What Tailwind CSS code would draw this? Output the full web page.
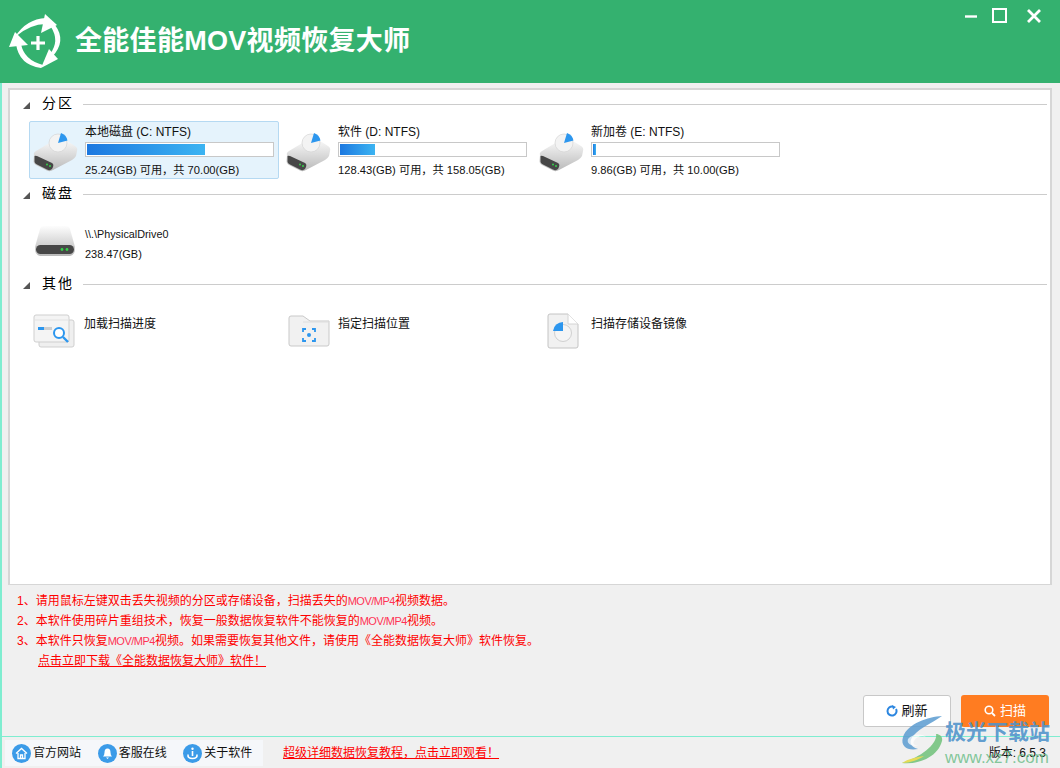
<!DOCTYPE html>
<html lang="zh-CN">
  <head>
    <meta charset="UTF-8" />
    <title>全能佳能MOV视频恢复大师</title>
    <script src="https://cdn.jsdelivr.net/npm/@tailwindcss/browser@4"></script>
  </head>
  <body class="bg-[#f0f0f0] overflow-hidden font-['Liberation_Sans','Noto_Sans_CJK_SC',sans-serif] text-black">
    <svg width="0" height="0" class="absolute">
      <defs>
        <linearGradient id="bodyGrad" x1="0" y1="0" x2="0" y2="1">
          <stop offset="0" stop-color="#fdfdfd" />
          <stop offset="1" stop-color="#b9b9b9" />
        </linearGradient>
        <symbol id="volume" viewBox="0 0 48 44">
          <path d="M2 26 Q1 24 4 22 L24 10 Q28 8 32 10 L43 17 Q46 19 45 22 L44 27 Q43 29 40 31 L21 41 Q18 43 15 41.5 L4 36 Q1 34 1.5 31 Z" fill="url(#bodyGrad)" />
          <path d="M2.5 28 Q2 26 5 27 L20 34 Q22 35 21 38 L20 40 Q18 42 15 40.5 L5 35.5 Q2 34 2.5 31 Z" fill="#474747" />
          <circle cx="15" cy="35.5" r="1" fill="#35d04a" />
          <circle cx="18" cy="37" r="1" fill="#35d04a" />
          <circle cx="26" cy="14" r="9" fill="#f3f3f3" stroke="#d4d4d4" stroke-width="0.7" />
          <path d="M26 14 L29 4 A10 10 0 0 1 35.5 11.5 Z" fill="#2c96ee" />
        </symbol>
      </defs>
    </svg>

    <div class="relative w-[1060px] h-[768px] flex flex-col">
      <!-- title bar -->
      <header class="h-[83px] shrink-0 bg-[#34b16f] flex items-center relative">
        <svg class="mt-[12px] w-[75px] h-[75px] shrink-0" viewBox="0 0 75 75" fill="none">
          <path d="M15 27 Q26 9 46 8 L46 14 Q30 14 15 27 Z" fill="#fff" />
          <path d="M45 4 L57 15 L41 23 Z" fill="#fff" />
          <path d="M55 15 Q67 31 52 47 L50 44 Q60 31 51 17 Z" fill="#fff" />
          <path d="M49 39 L58 49 L41 58 Z" fill="#fff" />
          <path d="M16 34 L21 34 Q24 50 43 55 L41 58 Q19 55 16 34 Z" fill="#fff" />
          <path d="M15 22 L9 37 L28 35 Z" fill="#fff" />
          <path d="M38 26 V40 M31 33 H45" stroke="#fff" stroke-width="3.2" />
        </svg>
        <h1 class="mt-[-1px] text-[27px] leading-none font-bold tracking-[0.3px] text-white whitespace-nowrap">全能佳能MOV视频恢复大师</h1>
        <div class="absolute left-[965px] top-[8px] flex items-center">
          <svg class="w-[12px] h-[14px]" viewBox="0 0 12 14"><path d="M0 7.5 H12" stroke="#fff" stroke-width="2.4" /></svg>
          <svg class="w-[15px] h-[15px] ml-[15px]" viewBox="0 0 15 15" fill="none"><rect x="1" y="1" width="13" height="13" stroke="#fff" stroke-width="2" /></svg>
          <svg class="w-[14px] h-[14px] ml-[20px]" viewBox="0 0 14 14"><path d="M1 1 L13 13 M13 1 L1 13" stroke="#fff" stroke-width="2.8" /></svg>
        </div>
      </header>

      <div class="flex-1 flex flex-col border-l-2 border-[#7fedd0] min-h-0">
        <!-- device list -->
        <main class="mt-[5px] ml-[6px] mr-[8px] h-[497px] shrink-0 bg-white border-2 border-[#d6d6d6] border-b-[1.5px] pl-[13px] pr-[3px] pt-[4px]">
          <section class="h-[90px]">
            <div class="flex items-center h-[20px]">
              <span class="w-0 h-0 border-l-[7px] border-l-transparent border-b-[7px] border-b-[#555] mr-[12px] mt-[3px]"></span>
              <span class="text-[14px] tracking-[2px] w-[41px] shrink-0 mt-[-2px]">分区</span>
              <span class="flex-1 h-px bg-[#cccccc]"></span>
            </div>
            <div class="flex gap-[3px] mt-[7px] ml-[6px]">
              <div class="w-[250px] h-[58px] flex bg-[#e5f3fc] border border-[#b5d9f2] rounded-[2px]">
                <svg class="w-[48px] h-[44px] mt-[7px] ml-[2px] shrink-0"><use href="#volume" /></svg>
                <div class="ml-[5px] w-[190px] text-[12px] leading-none">
                  <div class="mt-[3px] h-[15px] leading-[15px] text-[#111] whitespace-nowrap">本地磁盘 (C: NTFS)</div>
                  <div class="mt-[2px] w-[189px] h-[15px] border border-[#c8c8c8] bg-white p-[1px]"><div class="h-full bg-[linear-gradient(90deg,#1c78e0,#3cb4f2)]" style="width: 64%"></div></div>
                  <div class="mt-[6px] text-[11.2px] leading-[14px] whitespace-nowrap text-[#111]">25.24(GB) 可用，共 70.00(GB)</div>
                </div>
              </div>
              <div class="w-[250px] h-[58px] flex border border-transparent">
                <svg class="w-[48px] h-[44px] mt-[7px] ml-[2px] shrink-0"><use href="#volume" /></svg>
                <div class="ml-[5px] w-[190px] text-[12px] leading-none">
                  <div class="mt-[3px] h-[15px] leading-[15px] text-[#111] whitespace-nowrap">软件 (D: NTFS)</div>
                  <div class="mt-[2px] w-[189px] h-[15px] border border-[#c8c8c8] bg-white p-[1px]"><div class="h-full bg-[linear-gradient(90deg,#1c78e0,#3cb4f2)]" style="width: 19%"></div></div>
                  <div class="mt-[6px] text-[11.2px] leading-[14px] whitespace-nowrap text-[#111]">128.43(GB) 可用，共 158.05(GB)</div>
                </div>
              </div>
              <div class="w-[250px] h-[58px] flex border border-transparent">
                <svg class="w-[48px] h-[44px] mt-[7px] ml-[2px] shrink-0"><use href="#volume" /></svg>
                <div class="ml-[5px] w-[190px] text-[12px] leading-none">
                  <div class="mt-[3px] h-[15px] leading-[15px] text-[#111] whitespace-nowrap">新加卷 (E: NTFS)</div>
                  <div class="mt-[2px] w-[189px] h-[15px] border border-[#c8c8c8] bg-white p-[1px]"><div class="h-full bg-[linear-gradient(90deg,#1c78e0,#3cb4f2)]" style="width: 1.5%"></div></div>
                  <div class="mt-[6px] text-[11.2px] leading-[14px] whitespace-nowrap text-[#111]">9.86(GB) 可用，共 10.00(GB)</div>
                </div>
              </div>
            </div>
          </section>

          <section class="h-[90px]">
            <div class="flex items-center h-[20px]">
              <span class="w-0 h-0 border-l-[7px] border-l-transparent border-b-[7px] border-b-[#555] mr-[12px] mt-[3px]"></span>
              <span class="text-[14px] tracking-[2px] w-[41px] shrink-0 mt-[-2px]">磁盘</span>
              <span class="flex-1 h-px bg-[#cccccc]"></span>
            </div>
            <div class="flex mt-[7px] ml-[6px]">
              <svg class="w-[42px] h-[32px] mt-[14px] ml-[5px] shrink-0" viewBox="0 0 42 32">
                <path d="M6 4 Q7 1 10 1 H32 Q35 1 36 4 L41 22 Q41.5 30 36 31 H6 Q0.5 30 1 22 Z" fill="url(#bodyGrad)" />
                <rect x="2" y="20" width="38" height="9" rx="4.5" fill="#474747" />
                <circle cx="28" cy="24.5" r="1.4" fill="#35d04a" />
                <circle cx="33" cy="24.5" r="1.4" fill="#35d04a" />
              </svg>
              <div class="ml-[9px]">
                <div class="mt-[16px] text-[10.8px] leading-[14px] text-[#111]">\\.\PhysicalDrive0</div>
                <div class="mt-[6px] text-[11px] leading-[14px] text-[#111]">238.47(GB)</div>
              </div>
            </div>
          </section>

          <section>
            <div class="flex items-center h-[20px]">
              <span class="w-0 h-0 border-l-[7px] border-l-transparent border-b-[7px] border-b-[#555] mr-[12px] mt-[3px]"></span>
              <span class="text-[14px] tracking-[2px] w-[41px] shrink-0 mt-[-2px]">其他</span>
              <span class="flex-1 h-px bg-[#cccccc]"></span>
            </div>
            <div class="flex gap-[3px] mt-[7px] ml-[6px]">
              <div class="w-[250px] flex">
                <svg class="w-[42px] h-[34px] mt-[13px] ml-[4px] shrink-0" viewBox="0 0 42 34">
                  <rect x="6" y="6" width="35" height="27" rx="2" fill="#efefef" stroke="#cfcfcf" />
                  <rect x="1" y="1" width="35" height="27" rx="2" fill="#f4f4f4" stroke="#cfcfcf" />
                  <path d="M1 6 H36" stroke="#e2e2e2" />
                  <rect x="5" y="13" width="6" height="3" fill="#2c96ee" />
                  <rect x="11" y="13" width="8" height="3" fill="#cfcfcf" />
                  <circle cx="26" cy="19" r="5" fill="#fff" stroke="#2c96ee" stroke-width="2" />
                  <path d="M30 23 L35 28" stroke="#2c96ee" stroke-width="2.4" />
                </svg>
                <div class="ml-[9px] mt-[15px] text-[12px] leading-[16px] text-[#111] whitespace-nowrap">加载扫描进度</div>
              </div>
              <div class="w-[250px] flex">
                <svg class="w-[42px] h-[32px] mt-[14px] ml-[6px] shrink-0" viewBox="0 0 42 32" fill="none">
                  <path d="M1 3 Q1 1 3 1 H15 L22 6 H41 V29 Q41 31 39 31 H3 Q1 31 1 29 Z" fill="#f1f1f1" stroke="#c9c9c9" />
                  <path d="M15 7 H41" stroke="#dedede" />
                  <path d="M15 17 V14 H18 M24 14 H27 V17 M27 23 V26 H24 M18 26 H15 V23" stroke="#2c96ee" stroke-width="1.8" />
                  <circle cx="21" cy="20" r="2" fill="#2c96ee" />
                </svg>
                <div class="ml-[8px] mt-[15px] text-[12px] leading-[16px] text-[#111] whitespace-nowrap">指定扫描位置</div>
              </div>
              <div class="w-[250px] flex">
                <svg class="w-[32px] h-[36px] mt-[12px] ml-[12px] shrink-0" viewBox="0 0 32 36" fill="none">
                  <path d="M1 3 Q1 1 3 1 H21 L31 11 V33 Q31 35 29 35 H3 Q1 35 1 33 Z" fill="#f1f1f1" stroke="#c4c4c4" />
                  <path d="M21 1 V11 H31" fill="#fff" stroke="#d4d4d4" />
                  <circle cx="16" cy="20" r="8.5" fill="#f5f5f5" stroke="#d0d0d0" />
                  <path d="M16 18 V9 A10 10 0 0 0 6 18 Z" fill="#2c96ee" />
                </svg>
                <div class="ml-[12px] mt-[15px] text-[12px] leading-[16px] text-[#111] whitespace-nowrap">扫描存储设备镜像</div>
              </div>
            </div>
          </section>
        </main>

        <!-- notes -->
        <div class="mt-[6px] ml-[15px] text-[12px] text-[#ff0000] whitespace-nowrap">
          <p class="h-[20px] leading-[20px]">1、请用鼠标左键双击丢失视频的分区或存储设备，扫描丢失的<span class="text-[11px] leading-none tracking-[-0.5px] text-[#ff3355]">MOV/MP4</span>视频数据。</p>
          <p class="h-[20px] leading-[20px]">2、本软件使用碎片重组技术，恢复一般数据恢复软件不能恢复的<span class="text-[11px] leading-none tracking-[-0.5px] text-[#ff3355]">MOV/MP4</span>视频。</p>
          <p class="h-[20px] leading-[20px]">3、本软件只恢复<span class="text-[11px] leading-none tracking-[-0.5px] text-[#ff3355]">MOV/MP4</span>视频。如果需要恢复其他文件，请使用《全能数据恢复大师》软件恢复。</p>
          <p class="h-[20px] leading-[20px] ml-[21px] underline">点击立即下载《全能数据恢复大师》软件！</p>
        </div>

        <!-- actions -->
        <div class="mt-auto mb-[9px] mr-[11px] flex justify-end gap-[10px]">
          <button class="w-[88px] h-[32px] flex items-center justify-center gap-[3px] bg-white border border-[#c8c8c8] rounded-[3px] text-[13px] text-[#111]">
            <svg class="w-[12px] h-[12px]" viewBox="0 0 12 12" fill="none">
              <path d="M10 4 A4.5 4.5 0 1 1 7 1.7" stroke="#2c86e0" stroke-width="2" />
              <path d="M6 0 L10 2 L7 4.5 Z" fill="#2c86e0" />
            </svg>
            刷新
          </button>
          <button class="w-[88px] h-[32px] flex items-center justify-center gap-[4px] bg-[#ff7c21] rounded-[3px] text-[13px] text-white">
            <svg class="w-[12px] h-[12px]" viewBox="0 0 12 12" fill="none">
              <circle cx="5" cy="5" r="3.8" stroke="#fff" stroke-width="1.6" />
              <path d="M8 8 L11 11" stroke="#fff" stroke-width="1.8" />
            </svg>
            扫描
          </button>
        </div>

        <!-- status bar -->
        <footer class="h-[32px] shrink-0 border-t border-[#7fedd0] flex items-center pl-[3px] pt-[1px] text-[12px]">
          <nav class="h-[26px] w-[258px] bg-[#f5f7fa] flex items-center pl-[7px] text-[#111] shrink-0">
            <div class="w-[86px] flex items-center gap-[2px]">
              <svg class="w-[19px] h-[19px]" viewBox="0 0 19 19" fill="none">
                <circle cx="9.5" cy="9.5" r="9.5" fill="#3b9be8" />
                <path d="M4 9.5 L9.5 4.5 L15 9.5 M6 9 V14.5 H13 V9 M8.5 14.5 V11 H10.5 V14.5" stroke="#fff" stroke-width="1.3" />
              </svg>
              官方网站
            </div>
            <div class="w-[86px] flex items-center gap-[2px]">
              <svg class="w-[19px] h-[19px]" viewBox="0 0 19 19">
                <circle cx="9.5" cy="9.5" r="9.5" fill="#3b9be8" />
                <path d="M5 12.5 Q6.5 11 6.5 8.5 Q6.5 4.5 9.5 4.5 Q12.5 4.5 12.5 8.5 Q12.5 11 14 12.5 Z M8 13.5 H11 L9.5 15 Z" fill="#fff" />
              </svg>
              客服在线
            </div>
            <div class="w-[80px] flex items-center gap-[2px]">
              <svg class="w-[19px] h-[19px]" viewBox="0 0 19 19" fill="none">
                <circle cx="9.5" cy="9.5" r="9.5" fill="#3b9be8" />
                <circle cx="9.5" cy="4.8" r="1.2" fill="#fff" />
                <path d="M9.5 7 V12 M5 10.5 Q4.5 14.5 9.5 14.5 Q14.5 14.5 14 10.5" stroke="#fff" stroke-width="1.6" />
              </svg>
              关于软件
            </div>
          </nav>
          <a class="ml-[20px] text-[#ff0000] underline whitespace-nowrap">超级详细数据恢复教程，点击立即观看！</a>
          <span class="ml-auto mr-[14px] text-[12px] text-[#111] whitespace-nowrap">版本: 6.5.3</span>
        </footer>
      </div>

      <!-- site watermark over the corner -->
      <div class="absolute left-[900px] top-[715px] w-[160px] h-[53px] pointer-events-none">
        <svg class="absolute left-0 top-0 w-[46px] h-[50px]" viewBox="0 0 46 50" fill="none">
          <path d="M42 1 C28 2 8 8 3 22 C0 32 8 36 18 34 C10 32 8 26 14 20 C20 13 32 8 42 1 Z" fill="#5b9bd0" fill-opacity="0.85" />
          <path d="M8 24 C12 19 22 18 26 22 C22 20 16 22 14 26 C12 30 16 31 20 30 C14 32 6 30 8 24 Z" fill="#fff" fill-opacity="0.7" />
          <path d="M2 48 C18 50 38 42 42 26 C43 22 40 19 36 19 C38 28 22 42 2 48 Z" fill="#76c37f" fill-opacity="0.9" />
          <path d="M2 48 C10 48 18 45 24 41 C16 42 8 44 2 48 Z" fill="#e6dc58" />
        </svg>
        <div class="absolute left-[45px] top-[4px] text-[21px] leading-[26px] font-bold text-[#4f93cb]/90 whitespace-nowrap">极光下载站</div>
        <div class="absolute left-[45px] top-[33px] text-[17px] leading-[20px] text-[#66bb84]/80 whitespace-nowrap">www.xz7.com</div>
      </div>
    </div>
  </body>
</html>
